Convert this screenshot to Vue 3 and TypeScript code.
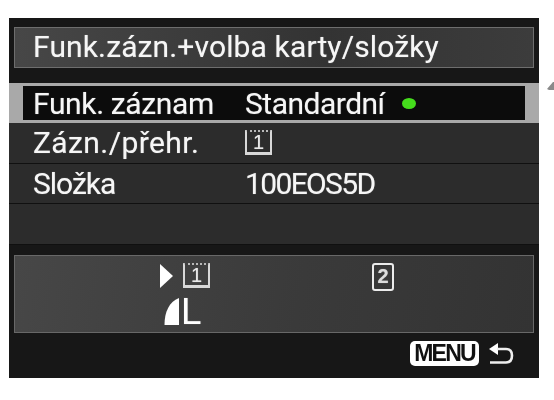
<script setup lang="ts">
// Camera LCD menu: recording function and card/folder selection
// labelTrack / valueTrack: letter-spacing per string, the camera font's widths differ from Roboto's
const rows = [
  { label: 'Funk. záznam', value: 'Standardní', kind: 'status', selected: true, labelTrack: -0.35, valueTrack: -0.5 },
  { label: 'Zázn./přehr.', value: '1', kind: 'card', selected: false, labelTrack: 0.4, valueTrack: 0 },
  { label: 'Složka', value: '100EOS5D', kind: 'text', selected: false, labelTrack: -1, valueTrack: -1.65 },
  { label: '', value: '', kind: 'text', selected: false, labelTrack: 0, valueTrack: 0 },
]
</script>

<template>
  <div class="page">
    <div class="screen">
      <div class="title-wrap">
        <div class="title">Funk.zázn.+volba karty/složky</div>
      </div>

      <div class="rows">
        <div v-for="(row, i) in rows" :key="i" class="row" :class="{ selected: row.selected }">
          <div class="row-inner">
            <span class="label" :style="{ letterSpacing: row.labelTrack + 'px' }">{{ row.label }}</span>
            <span v-if="row.kind === 'card'" class="card-one"><i>{{ row.value }}</i></span>
            <span v-else class="value" :style="{ letterSpacing: row.valueTrack + 'px' }">{{ row.value }}</span>
            <span v-if="row.kind === 'status'" class="dot"></span>
          </div>
        </div>
      </div>

      <div class="panel-wrap">
        <div class="panel">
          <div class="slot">
            <span class="play"></span>
            <span class="card-one"><i>1</i></span>
          </div>
          <div class="slot">
            <span class="card-two">2</span>
          </div>
          <div class="quality">
            <svg width="16" height="27" viewBox="0 0 16 27">
              <path d="M15 0V27H0.5C0.5 14 5 4 15 0Z" fill="#fff" />
            </svg>
            <span class="quality-l">L</span>
          </div>
        </div>
      </div>

      <div class="footer">
        <span class="menu-key">MENU</span>
        <svg class="back" width="26" height="24" viewBox="0 0 26 24" fill="none">
          <path d="M1 7L10 1V13Z" fill="#fff" />
          <path d="M9 7H18C22 7 24 9.500 24 13.500C24 17.500 22 20.500 18 20.500H2" stroke="#eee" stroke-width="2.600" />
        </svg>
      </div>
    </div>
    <svg class="pointer" width="8" height="10" viewBox="0 0 8 10">
      <path d="M0 8L6 1H8V9H2Z" fill="#8a8a8a" />
    </svg>
  </div>
</template>

<style scoped>
.page {
  position: relative;
  width: 554px;
  height: 400px;
  padding: 18px 0 0 9px;
  box-sizing: border-box;
  background: #fff;
  overflow: hidden;
  font-family: Roboto, "Noto Sans", sans-serif;
  color: #f6f6f6;
  text-shadow: 0 0 1px rgba(255, 255, 255, 0.5);
}
.screen {
  display: flex;
  flex-direction: column;
  width: 530px;
  height: 360px;
  background: #171717;
  filter: blur(0.5px);
}
.title-wrap {
  height: 65px;
  padding: 9px 5px 0;
  box-sizing: border-box;
}
.title {
  height: 41px;
  box-sizing: border-box;
  padding-left: 18px;
  border: 1px solid #6e6e6e;
  background: linear-gradient(90deg, #474747, #333 60%, #3c3c3c);
  font-size: 30px;
  line-height: 38px;
  letter-spacing: 0.13px;
  white-space: nowrap;
}
.rows {
  display: flex;
  flex-direction: column;
}
.row {
  height: 40.500px;
  box-sizing: border-box;
  background: #2c2c2c;
  border-bottom: 1px solid #101010;
}
.row.selected {
  height: 40px;
  padding: 3px 14px 3px;
  background: #a9a9a9;
  border-bottom: 0;
}
.row-inner {
  display: flex;
  align-items: center;
  height: 100%;
  padding-left: 24px;
  font-size: 30px;
}
.row.selected .row-inner {
  padding-left: 10px;
  background: #0c0c0c;
}
.label {
  width: 212px;
  flex: none;
  white-space: nowrap;
}
.value {
  white-space: nowrap;
}
.dot {
  width: 14px;
  height: 11px;
  margin-left: 17px;
  border-radius: 50%;
  background: #45dd1c;
}
.card-one {
  display: flex;
  justify-content: center;
  align-items: center;
  width: 27px;
  height: 25px;
  box-sizing: border-box;
  border: 2px solid #d8d8d8;
  border-top: 2px dotted #b8b8b8;
  border-bottom-width: 3px;
  color: #e8e8e8;
  font-family: "Liberation Sans", sans-serif;
  font-size: 20px;
}
.card-one i {
  font-style: normal;
  font-weight: 400;
  line-height: 1;
}
.panel-wrap {
  padding: 10px 5px 0;
}
.panel {
  display: grid;
  grid-template-columns: 212px 1fr;
  grid-template-rows: 35px auto;
  height: 78px;
  box-sizing: border-box;
  padding: 7px 0 0 145px;
  border: 1px solid #686868;
  background: linear-gradient(100deg, #474747, #3a3a3a 55%, #333);
}
.slot {
  display: flex;
  align-items: flex-start;
  gap: 10px;
}
.play {
  width: 0;
  height: 0;
  margin-top: 1px;
  border-left: 13px solid #fff;
  border-top: 12px solid transparent;
  border-bottom: 12px solid transparent;
}
.card-two {
  display: flex;
  justify-content: center;
  align-items: center;
  width: 22px;
  height: 28px;
  box-sizing: border-box;
  border: 2px solid #ececec;
  border-radius: 3px;
  font-family: "Liberation Sans", sans-serif;
  font-size: 20px;
  font-weight: 700;
  color: #ddd;
}
.quality {
  display: flex;
  align-items: flex-end;
  gap: 1px;
  height: 27px;
  margin-left: 4px;
}
.quality-l {
  font-family: "Liberation Sans", sans-serif;
  font-size: 37px;
  line-height: 27px;
  height: 27px;
  color: #fff;
}
.footer {
  display: flex;
  flex: 1;
  align-items: flex-start;
  padding: 8px 25px 0 0;
  justify-content: flex-end;
  gap: 9px;
}
.menu-key {
  width: 69px;
  height: 25px;
  box-sizing: border-box;
  border-radius: 5px;
  background: #fff;
  color: #111;
  font-family: "Liberation Sans", sans-serif;
  font-size: 23px;
  font-weight: 700;
  line-height: 25px;
  letter-spacing: -1.800px;
  text-align: center;
  text-shadow: none;
}
.back {
  margin-top: 1px;
}
.pointer {
  position: absolute;
  left: 547px;
  top: 81px;
}
</style>
